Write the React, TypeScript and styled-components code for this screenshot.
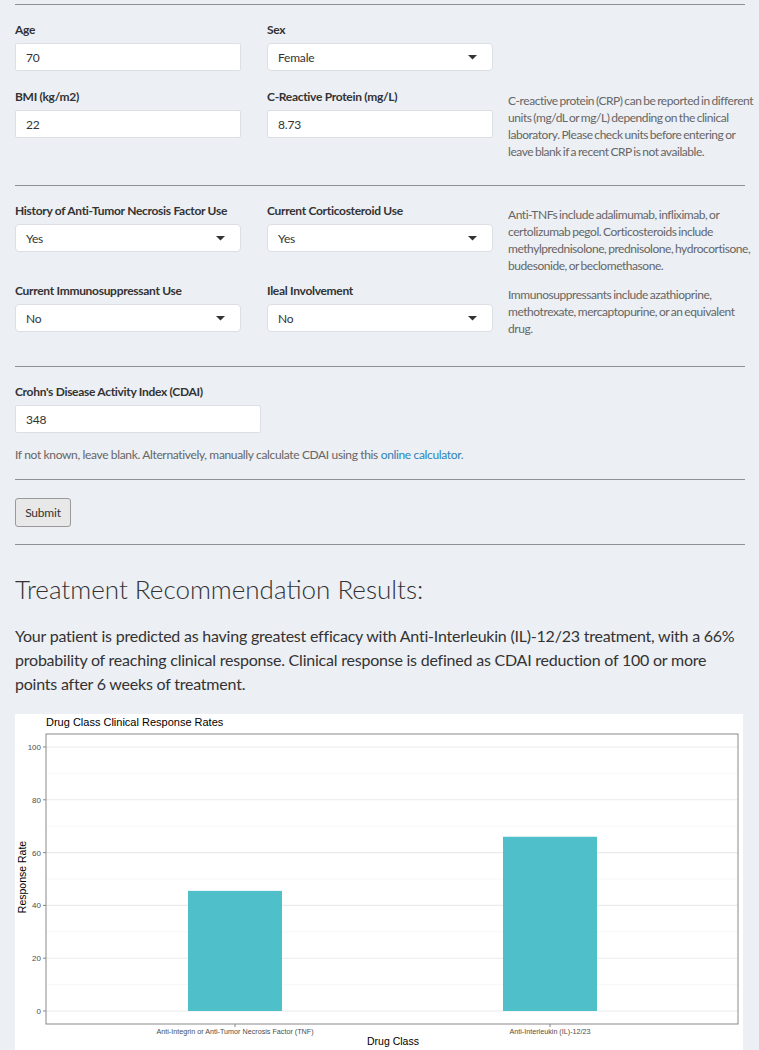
import styled, { createGlobalStyle } from 'styled-components'

const GlobalStyle = createGlobalStyle`
	body {
		margin: 0;
		background: #eceff4;
		font-family: Lato, "Open Sans", sans-serif;
		color: #333;
	}
`

const bars = [
	{ label: 'Anti-Integrin or Anti-Tumor Necrosis Factor (TNF)', value: 45.5 },
	{ label: 'Anti-Interleukin (IL)-12/23', value: 66 },
]

const axisFont = 'Liberation Sans, Arial, sans-serif'

const Caret = () => (
	<svg width="9" height="5" viewBox="0 0 9 5">
		<path d="M0 0 L9 0 L4.5 4.5 Z" fill="#333" />
	</svg>
)

const Chart = () => {
	// plot panel in chart coordinates
	const left = 31
	const top = 20
	const width = 692
	const height = 290
	const y0 = 297
	const perUnit = 2.64
	const yOf = (v: number) => y0 - v * perUnit
	const ticks = [0, 20, 40, 60, 80, 100]
	const minor = [10, 30, 50, 70, 90]
	const centers = [220, 535]
	return (
		<svg width="728" height="336" viewBox="0 0 728 336">
			<rect x="0" y="0" width="728" height="336" fill="#fff" />
			<text x="31" y="12" fontSize="11" fontFamily={axisFont} fill="#000">
				Drug Class Clinical Response Rates
			</text>
			{minor.map((t) => (
				<line key={'m' + t} x1={left} x2={left + width} y1={yOf(t)} y2={yOf(t)} stroke="#f3f3f3" strokeWidth="0.7" />
			))}
			{ticks.map((t) => (
				<g key={t}>
					<line x1={left} x2={left + width} y1={yOf(t)} y2={yOf(t)} stroke="#ebebeb" strokeWidth="1.1" />
					<line x1={left - 3} x2={left} y1={yOf(t)} y2={yOf(t)} stroke="#333" strokeWidth="0.6" />
					<text x={left - 5} y={yOf(t) + 3} fontSize="8" textAnchor="end" fontFamily={axisFont} fill="#4d4d4d">
						{t}
					</text>
				</g>
			))}
			{bars.map((b, i) => (
				<g key={b.label}>
					<rect x={centers[i] - 47} y={yOf(b.value)} width="94" height={b.value * perUnit} fill="#4fbfc9" />
					<line x1={centers[i]} x2={centers[i]} y1={top + height} y2={top + height + 3} stroke="#333" strokeWidth="0.6" />
					<text x={centers[i]} y={top + height + 10} fontSize="7.2" textAnchor="middle" fontFamily={axisFont} fill="#4d4d4d">
						{b.label}
					</text>
				</g>
			))}
			<rect x={left} y={top} width={width} height={height} fill="none" stroke="#8a8a8a" strokeWidth="1" />
			<text x={378} y={331} fontSize="10.5" textAnchor="middle" fontFamily={axisFont} fill="#000">
				Drug Class
			</text>
			<text transform="translate(11 163) rotate(-90)" fontSize="10.5" textAnchor="middle" fontFamily={axisFont} fill="#000">
				Response Rate
			</text>
		</svg>
	)
}

export default function App() {
	return (
		<>
			<GlobalStyle />
			<Page>
				<Rule />
				<Section>
					<Grid>
						<Field>
							<Label>Age</Label>
							<TextBox>70</TextBox>
						</Field>
						<Field>
							<Label>Sex</Label>
							<SelectBox>
								Female
								<Caret />
							</SelectBox>
						</Field>
						<div />
						<Field>
							<Label>BMI (kg/m2)</Label>
							<TextBox>22</TextBox>
						</Field>
						<Field>
							<Label>C-Reactive Protein (mg/L)</Label>
							<TextBox>8.73</TextBox>
						</Field>
						<Help>
							C-reactive protein (CRP) can be reported in different units (mg/dL or mg/L) depending on the clinical
							laboratory. Please check units before entering or leave blank if a recent CRP is not available.
						</Help>
					</Grid>
				</Section>
				<Rule />
				<Section>
					<Grid>
						<Field>
							<Label>History of Anti-Tumor Necrosis Factor Use</Label>
							<SelectBox>
								Yes
								<Caret />
							</SelectBox>
						</Field>
						<Field>
							<Label>Current Corticosteroid Use</Label>
							<SelectBox>
								Yes
								<Caret />
							</SelectBox>
						</Field>
						<Help>
							Anti-TNFs include adalimumab, infliximab, or certolizumab pegol. Corticosteroids include
							methylprednisolone, prednisolone, hydrocortisone, budesonide, or beclomethasone.
						</Help>
						<Field>
							<Label>Current Immunosuppressant Use</Label>
							<SelectBox>
								No
								<Caret />
							</SelectBox>
						</Field>
						<Field>
							<Label>Ileal Involvement</Label>
							<SelectBox>
								No
								<Caret />
							</SelectBox>
						</Field>
						<Help>
							Immunosuppressants include azathioprine, methotrexate, mercaptopurine, or an equivalent drug.
						</Help>
					</Grid>
				</Section>
				<Rule />
				<CdaiSection>
					<Label>Crohn's Disease Activity Index (CDAI)</Label>
					<TextBox $width={246}>348</TextBox>
					<Note>
						If not known, leave blank. Alternatively, manually calculate CDAI using this <Link href="#">online calculator.</Link>
					</Note>
				</CdaiSection>
				<Rule />
				<SubmitRow>
					<SubmitButton>Submit</SubmitButton>
				</SubmitRow>
				<Rule />
				<Heading>Treatment Recommendation Results:</Heading>
				<Result>
					Your patient is predicted as having greatest efficacy with Anti-Interleukin (IL)-12/23 treatment, with a 66%
					probability of reaching clinical response. Clinical response is defined as CDAI reduction of 100 or more
					points after 6 weeks of treatment.
				</Result>
				<ChartBox>
					<Chart />
				</ChartBox>
			</Page>
		</>
	)
}

const Page = styled.div`
	padding: 4px 14px 0 15px;
	width: 730px;
`

const Rule = styled.hr`
	margin: 0;
	border: 0;
	border-top: 1px solid #8e9196;
`

const Section = styled.div`
	padding: 16px 0 25px;
`

const Grid = styled.div`
	display: grid;
	grid-template-columns: 252px 241px 1fr;
	row-gap: 8px;
	margin-right: -14px;
	align-items: start;
`

const Field = styled.div`
	display: flex;
	flex-direction: column;
	padding-bottom: 9px;
`

const Label = styled.label`
	font-size: 12px;
	letter-spacing: -0.3px;
	font-weight: 700;
	color: #333;
	line-height: 18px;
	margin-bottom: 4px;
`

const TextBox = styled.div<{ $width?: number }>`
	box-sizing: border-box;
	width: ${(p) => p.$width ?? 226}px;
	height: 28px;
	background: #fff;
	border: 1px solid #dcdfe4;
	border-radius: 2px;
	padding: 0 10px;
	display: flex;
	align-items: center;
	font-size: 12px;
	letter-spacing: -0.2px;
	color: #333;
`

const SelectBox = styled(TextBox)`
	justify-content: space-between;
	padding-right: 15px;
	border-radius: 4px;
`

const Help = styled.p`
	margin: 4px 0 0;
	font-size: 12px;
	letter-spacing: -0.45px;
	word-spacing: -0.8px;
	line-height: 17px;
	color: #666;
`

const CdaiSection = styled.div`
	display: flex;
	flex-direction: column;
	padding: 16px 0 16px;
`

const Note = styled.p`
	margin: 13px 0 0;
	font-size: 12px;
	letter-spacing: -0.35px;
	line-height: 17px;
	color: #666;
`

const Link = styled.a`
	color: #2c85b8;
	text-decoration: none;
`

const SubmitRow = styled.div`
	padding: 18px 0 17px;
`

const SubmitButton = styled.button`
	display: block;
	height: 29px;
	width: 56px;
	font-family: inherit;
	font-size: 12px;
	letter-spacing: -0.2px;
	color: #333;
	background: #e8e8e8;
	border: 1px solid #9a9a9a;
	border-radius: 3px;
	padding: 0;
`

const Heading = styled.h2`
	margin: 27px 0 0;
	font-size: 26px;
	font-weight: 300;
	line-height: 34px;
	color: #333;
`

const Result = styled.p`
	margin: 18px 0 0;
	font-size: 16px;
	letter-spacing: -0.22px;
	line-height: 24px;
	color: #333;
`

const ChartBox = styled.div`
	margin-top: 18px;
	width: 728px;
	line-height: 0;
`
